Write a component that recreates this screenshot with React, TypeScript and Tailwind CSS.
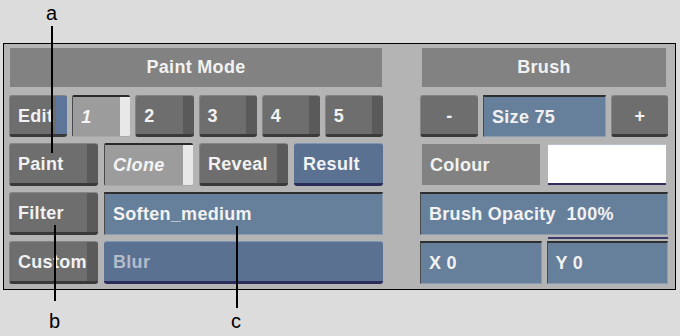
import type { ReactNode } from 'react'

const font = "font-['Liberation_Sans',Arial,sans-serif]"

function GrayButton({ label, strip = 'bg-[#5a5a5a]' }: { label: string; strip?: string }) {
  return (
    <div className="flex h-full rounded-[3px] overflow-hidden bg-[#6e6e6e] border-t border-l border-[#858585] border-b-[3px] border-b-[#3a3a3a]">
      <span className="flex-1 flex items-center pl-[8px] pt-[2px] text-[#f2f2f2]">{label}</span>
      <span className={`w-[11px] ${strip}`} />
    </div>
  )
}

function SelectedButton({ label }: { label: string }) {
  return (
    <div className="flex h-full rounded-[2px] overflow-hidden bg-[#9c9c9c] border-t-2 border-t-[#2a2a2a] border-l border-l-[#4a4a4a] border-b border-b-[#a8a8a8]">
      <span className="flex-1 flex items-center pl-[8px] pt-[1px] italic text-[#f4f4f4]">{label}</span>
      <span className="w-[10px] bg-[#e8e8e8]" />
    </div>
  )
}

function BlueButton({ label, dim = false }: { label: string; dim?: boolean }) {
  return (
    <div
      className={`flex items-center h-full pl-[9px] pt-[2px] rounded-[3px] bg-[#5a7192] border-t border-t-[#7f95b4] border-b-[3px] border-b-[#2c2c5c] ${
        dim ? 'text-[#b4bccb]' : 'text-[#f2f2f2]'
      }`}
    >
      {label}
    </div>
  )
}

function Field({ children }: { children: ReactNode }) {
  return (
    <div className="flex items-center h-full pl-[8px] pt-[1px] bg-[#667f9a] border-t-2 border-t-[#2e2e2e] border-l border-l-[#4a4a4a] border-r border-r-[#8a9bb0] border-b border-b-[#8d9db2] text-[#f2f2f2]">
      {children}
    </div>
  )
}

function Header({ title }: { title: string }) {
  return (
    <div className="h-[39px] flex items-center justify-center bg-[#828282] text-[#f2f2f2]">{title}</div>
  )
}

export default function App() {
  return (
    <div className={`relative w-[680px] h-[336px] bg-[#dcdcdc] overflow-hidden ${font}`}>
      <div className="absolute left-0 top-0 w-full text-[20px] text-black">
        <span className="absolute left-[46px] top-[-2px]">a</span>
        <span className="absolute left-[49px] top-[306px]">b</span>
        <span className="absolute left-[231px] top-[306px]">c</span>
      </div>

      <div className="ml-[3px] mt-[43px] w-[673px] h-[247px] border border-black bg-[#b4b4b4] pl-[5px] pt-[4px] pr-[6px] flex text-[18px] tracking-[0.3px] font-bold">
        {/* Paint Mode */}
        <div className="w-[374px] flex flex-col">
          <div className="mx-[1px]">
            <Header title="Paint Mode" />
          </div>
          <div className="mt-[8px] flex flex-col gap-[6px]">
            <div className="grid grid-cols-6 gap-[5px] h-[42px]">
              <GrayButton label="Edit" strip="bg-[#5d7598]" />
              <SelectedButton label="1" />
              <GrayButton label="2" />
              <GrayButton label="3" />
              <GrayButton label="4" />
              <GrayButton label="5" />
            </div>
            <div className="grid grid-cols-4 gap-[6px] h-[43px]">
              <GrayButton label="Paint" />
              <SelectedButton label="Clone" />
              <GrayButton label="Reveal" />
              <BlueButton label="Result" />
            </div>
            <div className="flex gap-[6px] h-[43px]">
              <div className="w-[89px]">
                <GrayButton label="Filter" />
              </div>
              <div className="flex-1">
                <Field>Soften_medium</Field>
              </div>
            </div>
            <div className="flex gap-[6px] h-[43px]">
              <div className="w-[89px]">
                <GrayButton label="Custom" />
              </div>
              <div className="flex-1">
                <BlueButton label="Blur" dim />
              </div>
            </div>
          </div>
        </div>

        {/* Brush */}
        <div className="ml-[37px] w-[248px] flex flex-col">
          <div className="mx-[2px]">
            <Header title="Brush" />
          </div>
          <div className="mt-[8px] flex flex-col gap-[6px]">
            <div className="flex gap-[5px] h-[42px]">
              <div className="w-[58px] h-full flex rounded-[3px] bg-[#6e6e6e] border-t border-l border-[#858585] border-b-[3px] border-b-[#3a3a3a] items-center justify-center pt-[2px] text-[#f2f2f2]">
                -
              </div>
              <div className="flex-1">
                <Field>Size 75</Field>
              </div>
              <div className="w-[57px] h-full flex rounded-[3px] bg-[#6e6e6e] border-t border-l border-[#858585] border-b-[3px] border-b-[#3a3a3a] items-center justify-center pt-[2px] text-[#f2f2f2]">
                +
              </div>
            </div>
            <div className="grid grid-cols-2 gap-[8px] h-[43px] px-[2px] py-[1px]">
              <div className="flex items-center pl-[8px] pt-[1px] bg-[#828282] text-[#f2f2f2]">Colour</div>
              <div className="bg-white border-t border-t-[#b8c0d0] border-b-2 border-b-[#2e2e5e]" />
            </div>
            <div className="relative h-[43px]">
              <Field>Brush Opacity&nbsp; 100%</Field>
              <div className="absolute right-0 bottom-[-4px] w-[120px] h-[2px] bg-[#3a3a6a]" />
            </div>
            <div className="grid grid-cols-2 gap-[5px] h-[43px]">
              <Field>X 0</Field>
              <Field>Y 0</Field>
            </div>
          </div>
        </div>
      </div>

      {/* callout leader lines */}
      <div className="absolute left-[51px] top-[26px] w-[2px] h-[127px] bg-black" />
      <div className="absolute left-[54px] top-[225px] w-[2px] h-[76px] bg-black" />
      <div className="absolute left-[236px] top-[226px] w-[2px] h-[82px] bg-black" />
    </div>
  )
}
